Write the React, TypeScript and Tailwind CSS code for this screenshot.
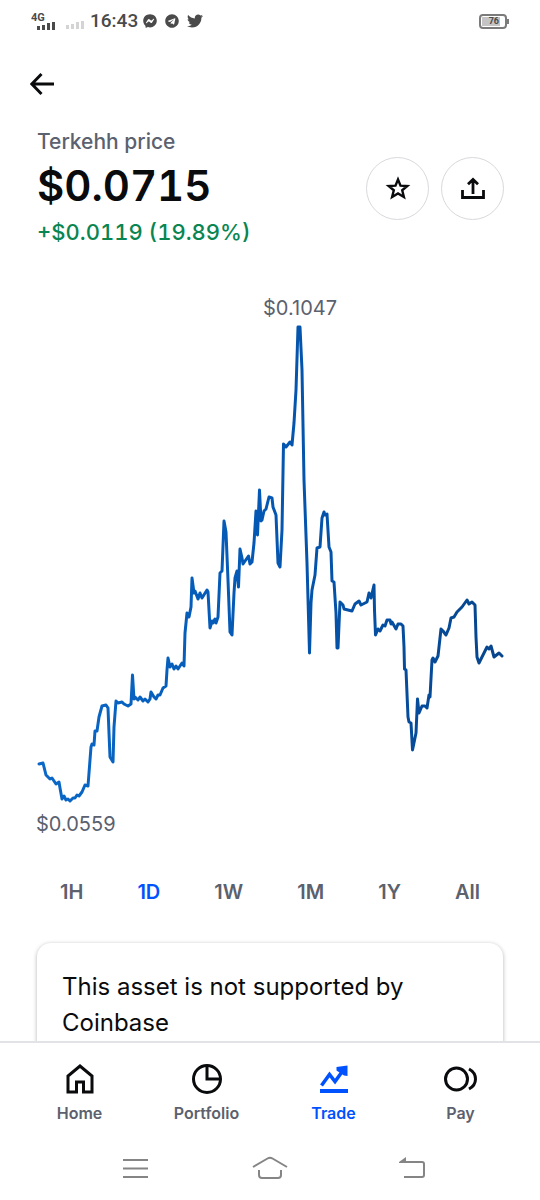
import type { ReactNode } from "react";
import { FaFacebookMessenger, FaTelegram, FaTwitter } from "react-icons/fa";

const PRICE_LINE =
    "39,764 43,763 44,767 46,775 50,779 52,778 54,781 56,784 59,782 60,788 62,799 64,796 66,800 68,799 70,801 73,798 75,798 77,795 79,796 82,792 85,785 88,786 89,773 91,747 92,744 94,745 95,731 97,731 99,717 102,706 106,705 108,708 109,733 110,757 113,762 114,727 116,701 118,703 122,702 124,704 128,706 131,704 " +
    "132.5,675 134,699 135,697 138,700 140,697 143,701 145,699 148,702 150,699 151,692 154,697 156,699 158,695 160,695 163,688 166,686 167,670 168,658 170,667 172,664 174,669 176,666 178,669 182,663 184,666 185,633 187,613 189,617 191,607 192,578 194,593 195,591 198,599 200,593 202,598 207,590 208,592 210,628 212,621 213,623 215,619 216,623 218,617 " +
    "220,573 222,571 224,521 226,532 228,580 230,632 232,635 234,593 235,578 237,571 238.5,587 240,549 242,558 243,564 248.5,556 250,564 252,562 254,543 256,511 257.5,535 259.5,490 261,521 262,520 264,511 266,509 269,497 272,498 273,507 276,515 278,563 280,567 282,530 283.5,444 286,447 290,442 292,445 294,423 296,390 298,327 300,327 302,370 304,480 307,563 " +
    "309.5,653 311,603 312,590 315,575 317,548 320,547 322,518 324,512 325,515 327,514 329,547 331,552 332,581 334,582 336,613 337,648 338,648 340,602 343,605 344,609 348,610 352,611 355,604 359,601 361,605 367,602 369,593 371,598 374,585 374.5,610 375.5,635 378,629 380,631 383,625 385,626 387,620 390,620 391,624 392,622 396,629 398,624 401,624 403,626 " +
    "404,647 404.5,669 406,670 408,717 409,722 411,723 412.5,750 416,733 417.5,699 419,713 422,706 425,706 427,708 429,695 430,697 432,660 433,658 435,662 438,656 441,629 443,631 446,635 449,628 451,618 454,617 457,612 462,607 467,600 469,604 472,602 475,605 476,637 477,657 479,663 483,655 487,647 489,649 491,646 494,657 499,653 502,656";

const RANGES = ["1H", "1D", "1W", "1M", "1Y", "All"];

function Signal({className}: {className: string}) {
    return <svg className={className} width="19" height="8" viewBox="0 0 19 8" fill="currentColor">
        <rect x="0" y="4" width="3" height="4"/>
        <rect x="5" y="3" width="3" height="5"/>
        <rect x="10" y="1" width="3" height="7"/>
        <rect x="15" y="0" width="3" height="8"/>
    </svg>
}

function StatusBar() {
    return <div className="flex h-[42px] shrink-0 items-center px-[31px] font-[Roboto,sans-serif] text-[#4a4a4a]">
        <div className="flex w-[25px] flex-col">
            <span className="text-[11px] leading-[9px] font-bold">4G</span>
            <Signal className="ml-[6px]"/>
        </div>
        <Signal className="mt-2 ml-[10px] text-[#d4d4d4]"/>
        <span className="ml-[5px] text-[19px] leading-6 font-medium">16:43</span>
        <div className="ml-[5px] flex items-center gap-2">
            <FaFacebookMessenger size={14}/>
            <FaTelegram size={14}/>
            <FaTwitter size={16}/>
        </div>
        <div className="ml-auto flex items-center">
            <div className="flex h-[15px] w-[28px] rounded-[4px] border-2 border-[#7b7b7b] p-px">
                <span className="w-[18px] bg-[#c4c4c4] pr-px text-right text-[9px] leading-[9px] font-bold">76</span>
            </div>
            <div className="h-[5px] w-[2px] bg-[#7b7b7b]"/>
        </div>
    </div>
}

function RoundButton({label, children}: {label: string, children: ReactNode}) {
    return <button aria-label={label} className="flex size-[63px] items-center justify-center rounded-full border border-[#d8d9dc]">
        <svg width="26" height="26" viewBox="0 0 26 26" fill="none" stroke="#0a0b0d" strokeWidth="2.8">{children}</svg>
    </button>
}

function PriceHeader() {
    return <div className="flex items-center justify-between pr-[36px] pl-[37px]">
        <div>
            <h1 className="text-[21px] leading-7 font-medium text-[#5b616e]">Terkehh price</h1>
            <div className="text-[42px] leading-[60px] font-semibold tabular-nums">$0.0715</div>
            <div className="text-[22px] leading-8 font-medium text-[#098551] tabular-nums">+$0.0119 (19.89%)</div>
        </div>
        <div className="flex gap-3">
            <RoundButton label="Watch">
                <path strokeWidth="2.4" d="M13 4.500 15.500 10.600 22.300 11 17.200 15.300 18.900 22 13 18.500 7.100 22 8.800 15.300 3.700 11 10.500 10.600Z"/>
            </RoundButton>
            <RoundButton label="Share">
                <path d="M2.500 15V22.500H23.500V15M13 19V5M8 9.300 13 4.500 18 9.300"/>
            </RoundButton>
        </div>
    </div>
}

function Chart() {
    return <div className="relative mt-11 text-[20px] text-[#5b616e]">
        <span className="absolute top-0 left-[300px] -translate-x-1/2 leading-8">$0.1047</span>
        <svg className="block w-full" viewBox="0 292 540 548" fill="none">
            <defs>
                <linearGradient id="line" gradientUnits="userSpaceOnUse" x1="37" y1="0" x2="503" y2="0">
                    <stop offset="0" stopColor="#0a68c8"/>
                    <stop offset="0.5" stopColor="#0457b2"/>
                    <stop offset="1" stopColor="#07458c"/>
                </linearGradient>
            </defs>
            <polyline points={PRICE_LINE} stroke="url(#line)" strokeWidth="3" strokeLinejoin="round" strokeLinecap="round"/>
        </svg>
        <span className="absolute bottom-0 left-[36px] leading-8">$0.0559</span>
    </div>
}

function Tab({label, active, children}: {label: string, active?: boolean, children: ReactNode}) {
    return <a href="#" className={active ? "flex flex-col items-center text-[#0052ff]" : "flex flex-col items-center text-[#0a0b0d]"}>
        <svg width="36" height="36" viewBox="0 0 36 36" fill="none" stroke="currentColor" strokeWidth="3">{children}</svg>
        <span className={active ? "mt-1 text-[16px] leading-6 font-semibold" : "mt-1 text-[16px] leading-6 font-semibold text-[#5b616e]"}>{label}</span>
    </a>
}

function TabBar() {
    return <nav className="grid shrink-0 grid-cols-4 border-t-2 border-[#e2e3e6] px-4 pt-[18px]">
        <Tab label="Home">
            <path d="M6 31V15L18 5 30 15V31H21.500V21H14.500V31Z"/>
        </Tab>
        <Tab label="Portfolio">
            <circle cx="18" cy="18" r="13.500"/>
            <path d="M18 4.500V18H31.500"/>
        </Tab>
        <Tab label="Trade" active>
            <path strokeWidth="4" d="M4 30H32"/>
            <path strokeWidth="3.500" d="M5.500 24.500 13.500 13.500 19 20.500 27 9.500"/>
            <path fill="currentColor" stroke="none" d="M20.500 6 31.500 4.500V15L28 14.500 20.500 9.500Z"/>
        </Tab>
        <Tab label="Pay">
            <circle cx="13.500" cy="18" r="11"/>
            <path d="M26 8Q32.500 11.500 32.500 18T26 28"/>
        </Tab>
    </nav>
}

function SystemBar() {
    return <div className="grid h-[75px] shrink-0 grid-cols-3 items-center justify-items-center px-[68px] pt-[13px]">
        <button aria-label="Recent apps">
            <svg width="50" height="30" viewBox="0 0 50 30" stroke="#858585" strokeWidth="2">
                <path d="M13 6H38M13 14.500H38M13 23H38"/>
            </svg>
        </button>
        <button aria-label="System home">
            <svg width="50" height="30" viewBox="0 0 50 30" fill="none" stroke="#858585" strokeWidth="2">
                <path d="M8 13 22.500 4.500Q25 3 27.500 4.500L42 13M14 16V21Q14 24 17 24H33Q36 24 36 21V16"/>
            </svg>
        </button>
        <button aria-label="System back">
            <svg width="50" height="30" viewBox="0 0 50 30" fill="none" stroke="#858585" strokeWidth="2">
                <path d="M20 8H42Q44 8 44 10V21Q44 23 42 23H24"/>
                <path fill="#858585" stroke="none" d="M19 8 26 3V9H19Z"/>
            </svg>
        </button>
    </div>
}

export default function App() {
    return <div className="flex h-screen flex-col bg-white font-[Inter,sans-serif] text-[#0a0b0d]">
        <StatusBar/>
        <main className="min-h-0 flex-1 overflow-hidden">
            <header className="flex h-[86px] pt-[30px] pl-[30px]">
                <button aria-label="Back" className="size-6">
                    <svg width="24" height="24" viewBox="0 0 24 24" fill="none" stroke="#0a0b0d" strokeWidth="3">
                        <path d="M24 12H2M11.500 2 1.800 12 11.500 22"/>
                    </svg>
                </button>
            </header>
            <PriceHeader/>
            <Chart/>
            <div className="mt-8 flex justify-between px-[60px]">
                {RANGES.map(range => <button key={range} className={range === "1D" ? "text-[20px] leading-10 font-semibold text-[#0052ff]" : "text-[20px] leading-10 font-semibold text-[#5b616e]"}>
                    {range}
                </button>)}
            </div>
            <div className="mx-[37px] mt-[31px] rounded-[14px] px-[25px] pt-[26px] pb-8 shadow-[0_1px_4px_rgba(0,0,0,0.3)]">
                <p className="text-[24px] leading-9">This asset is not supported by Coinbase</p>
            </div>
        </main>
        <TabBar/>
        <SystemBar/>
    </div>
}
